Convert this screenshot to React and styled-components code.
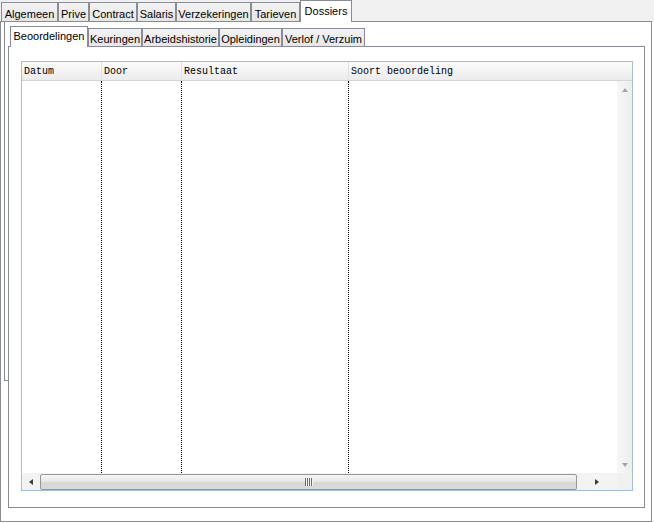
import React from "react"
import styled, { createGlobalStyle } from "styled-components"

const GlobalStyle = createGlobalStyle`
  body {
    margin: 0;
    background: #fff;
    font-family: "Liberation Sans", Arial, sans-serif;
  }
`;

const Screen = styled.div`
  width: 654px;
  height: 523px;
  overflow: hidden;
  background: #fff;
`;

const TabStrip = styled.div`
  display: flex;
  align-items: flex-end;
  height: ${p => p.height}px;
  background: ${p => p.bg};
`;

const StripLine = styled.div`
  align-self: stretch;
  width: ${p => (p.width ? p.width + "px" : "auto")};
  flex: ${p => (p.grow ? 1 : "none")};
  border-bottom: ${p => (p.noLine ? "none" : "1px solid #898c95")};
`;

const Tab = styled.div`
  box-sizing: border-box;
  width: ${p => p.width}px;
  height: ${p => (p.active ? p.tall : p.tall - 2)}px;
  display: flex;
  align-items: flex-end;
  justify-content: center;
  padding-bottom: ${p => (p.active ? 5 : 1)}px;
  border: 1px solid #898c95;
  border-bottom: ${p => (p.active ? "none" : "1px solid #898c95")};
  background: ${p => (p.active ? "#fff" : "linear-gradient(#f3f3f3, #e6e6e6)")};
  font-size: 11px;
  line-height: 12px;
  color: #000;
  white-space: nowrap;
`;

const OuterPanel = styled.div`
  box-sizing: border-box;
  width: 652px;
  height: 500px;
  border: 1px solid #898c95;
  border-top: none;
  display: flex;
`;

const GhostEdge = styled.div`
  box-sizing: border-box;
  align-self: flex-start;
  margin-left: 3px;
  width: 4px;
  height: 359px;
  border-left: 1px solid #898c95;
  border-bottom: 1px solid #898c95;
`;

const InnerColumn = styled.div`
  width: 637px;
  margin-top: 4px;
  display: flex;
  flex-direction: column;
`;

const InnerPanel = styled.div`
  box-sizing: border-box;
  width: 637px;
  height: 461px;
  border: 1px solid #898c95;
  border-top: none;
  padding: 14px 0 0 12px;
`;

const Grid = styled.div`
  box-sizing: border-box;
  width: 612px;
  height: 430px;
  border: 1px solid #a3bbe0;
  display: flex;
  flex-direction: column;
  font-family: "Liberation Mono", "DejaVu Sans Mono", monospace;
  font-size: 10px;
`;

const HeaderRow = styled.div`
  box-sizing: border-box;
  height: 19px;
  display: flex;
  background: linear-gradient(#fbfbfb, #f3f3f3 50%, #ebebeb);
  border-bottom: 1px solid #d5d5d5;
`;

const HeaderCell = styled.div`
  box-sizing: border-box;
  width: ${p => (p.width ? p.width + "px" : "auto")};
  flex: ${p => (p.width ? "none" : 1)};
  padding-left: 2px;
  display: flex;
  align-items: center;
  border-right: ${p => (p.last ? "none" : "1px solid #e0e0e0")};
  color: #000;
`;

const Body = styled.div`
  flex: 1;
  display: flex;
`;

const DataArea = styled.div`
  flex: 1;
  display: flex;
  background: #fff;
`;

const Column = styled.div`
  box-sizing: border-box;
  width: ${p => (p.width ? p.width + "px" : "auto")};
  flex: ${p => (p.width ? "none" : 1)};
  border-right: ${p => (p.last ? "none" : "1px dotted #000")};
`;

const VScroll = styled.div`
  width: 15px;
  display: flex;
  flex-direction: column;
  justify-content: space-between;
  align-items: center;
  padding: 7px 0 6px;
  box-sizing: border-box;
  background: linear-gradient(90deg, #f7f7f7, #ededed);
`;

const HScrollRow = styled.div`
  height: 17px;
  display: flex;
`;

const HTrack = styled.div`
  flex: 1;
  display: flex;
  align-items: center;
  background: #f3f3f3;
`;

const ArrowButton = styled.div`
  width: ${p => p.width}px;
  height: 100%;
  display: flex;
  align-items: center;
  justify-content: center;
`;

const Arrow = styled.span`
  width: 0;
  height: 0;
  border-style: solid;
  border-color: transparent;
  ${p =>
    p.dir === "up" && `border-width: 0 3.5px 4px; border-bottom-color: #a3a3a3;`}
  ${p =>
    p.dir === "down" && `border-width: 4px 3.5px 0; border-top-color: #a3a3a3;`}
  ${p =>
    p.dir === "left" && `border-width: 3.5px 4px 3.5px 0; border-right-color: #3c3c3c;`}
  ${p =>
    p.dir === "right" && `border-width: 3.5px 0 3.5px 4px; border-left-color: #3c3c3c;`}
`;

const Thumb = styled.div`
  box-sizing: border-box;
  width: 537px;
  height: 16px;
  border: 1px solid #979797;
  border-radius: 2px;
  background: linear-gradient(#f5f5f5, #e8e8e8 45%, #d6d6d6 55%, #dadada);
  display: flex;
  align-items: center;
  justify-content: center;
`;

const Corner = styled.div`
  width: 15px;
  background: #f0f0f0;
`;

const outerTabs = [
  ["Algemeen", 57],
  ["Prive", 31],
  ["Contract", 48],
  ["Salaris", 39],
  ["Verzekeringen", 75],
  ["Tarieven", 49],
  ["Dossiers", 52, true],
];

const innerTabs = [
  ["Beoordelingen", 78, true],
  ["Keuringen", 54],
  ["Arbeidshistorie", 77],
  ["Opleidingen", 63],
  ["Verlof / Verzuim", 83],
];

const columns = [
  ["Datum", 80],
  ["Door", 80],
  ["Resultaat", 167],
  ["Soort beoordeling"],
];

function Grip() {
  return (
    <svg width="8" height="8" viewBox="0 0 8 8">
      {[0, 2, 4, 6].map(x => (
        <rect key={x} x={x} y="0" width="1" height="8" fill="#6e6e6e" />
      ))}
      {[1, 3, 5, 7].map(x => (
        <rect key={x} x={x} y="0" width="1" height="8" fill="#f4f4f4" />
      ))}
    </svg>
  );
}

export default function App() {
  return (
    <Screen>
      <GlobalStyle />
      <TabStrip height={22} bg="#f0f0f0">
        <StripLine width={1} />
        {outerTabs.map(([label, w, active]) => (
          <Tab key={label} width={w} tall={22} active={active}>
            {label}
          </Tab>
        ))}
        <StripLine grow />
        <StripLine width={2} noLine />
      </TabStrip>
      <OuterPanel>
        <GhostEdge />
        <InnerColumn>
          <TabStrip height={21} bg="#fff">
            <StripLine width={2} />
            {innerTabs.map(([label, w, active]) => (
              <Tab key={label} width={w} tall={21} active={active}>
                {label}
              </Tab>
            ))}
            <StripLine grow />
          </TabStrip>
          <InnerPanel>
            <Grid>
              <HeaderRow>
                {columns.map(([label, w], i) => (
                  <HeaderCell key={label} width={w} last={i === columns.length - 1}>
                    {label}
                  </HeaderCell>
                ))}
              </HeaderRow>
              <Body>
                <DataArea>
                  {columns.map(([label, w], i) => (
                    <Column key={label} width={w} last={i === columns.length - 1} />
                  ))}
                </DataArea>
                <VScroll>
                  <Arrow dir="up" />
                  <Arrow dir="down" />
                </VScroll>
              </Body>
              <HScrollRow>
                <HTrack>
                  <ArrowButton width={18}>
                    <Arrow dir="left" />
                  </ArrowButton>
                  <Thumb>
                    <Grip />
                  </Thumb>
                  <ArrowButton width={40}>
                    <Arrow dir="right" />
                  </ArrowButton>
                </HTrack>
                <Corner />
              </HScrollRow>
            </Grid>
          </InnerPanel>
        </InnerColumn>
      </OuterPanel>
    </Screen>
  );
}
